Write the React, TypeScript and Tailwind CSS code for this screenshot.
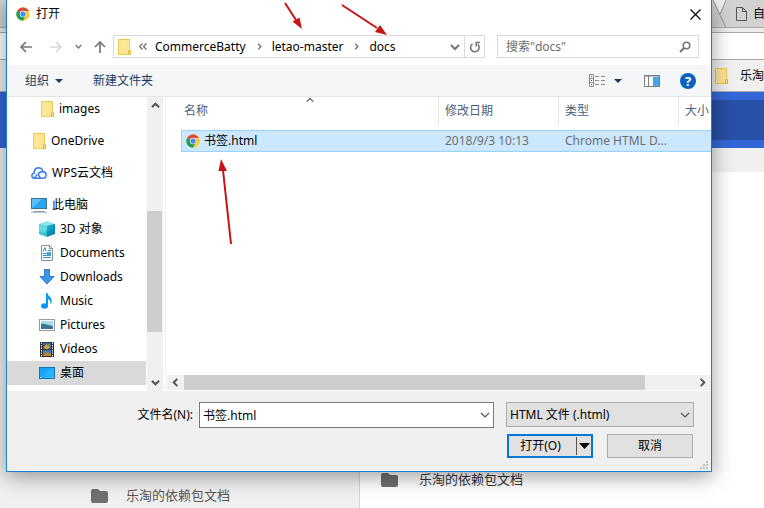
import React from 'react';

const FONT = "font-['Noto_Sans','Noto_Sans_CJK_SC',sans-serif]";

function ChromeIcon({ className }: { className: string }) {
  return (
    <svg className={className} viewBox="0 0 48 48" aria-hidden="true">
      <circle cx="24" cy="24" r="23" fill="#fbcb3d" />
      <path d="M4.1 12.5 A23 23 0 0 0 24 47 L33 29 L24 24 L15 29 Z" fill="#1aa05b" />
      <path d="M4.1 12.5 L14.5 29.5 L20 24 L9 11 Z" fill="#1aa05b" />
      <path d="M5 11.5 A23 23 0 0 1 43.9 13.5 H24 L14 20 Z" fill="#dc4a3d" />
      <circle cx="24" cy="24" r="11" fill="#f4f4f4" />
      <circle cx="24" cy="24" r="9" fill="#4a8af4" />
    </svg>
  );
}

function FolderIcon() {
  return (
    <svg className="h-4 w-[13px] shrink-0" viewBox="0 0 13 16" aria-hidden="true">
      <path d="M.5 .5H11.5V11L12.5 12V15.5H.5Z" fill="#ffe596" stroke="#ecc94f" />
      <path d="M10.5 15.5V12L11.5 11L12.5 12V15.5Z" fill="#ffe082" stroke="#e3b93a" />
    </svg>
  );
}

function Chevron({ className, d, width = 2 }: { className: string; d: string; width?: number }) {
  return (
    <svg className={className} viewBox="0 0 10 10" fill="none" stroke="currentColor" strokeWidth={width} aria-hidden="true">
      <path d={d} />
    </svg>
  );
}

const DOWN = 'M1 3L5 7L9 3';
const UP = 'M1 7L5 3L9 7';
const LEFT = 'M7 1L3 5L7 9';
const RIGHT = 'M3 1L7 5L3 9';

const icon16 = 'h-4 w-4 shrink-0';

function CloudIcon() {
  return (
    <svg className={icon16} viewBox="0 0 16 16" fill="none" stroke="#3f7ff0" strokeWidth="1.6" aria-hidden="true">
      <path d="M5.800 9.600L3.600 13.200C.3 13.200 -.2 8.700 3.300 8C2.800 1.500 11.300 1.300 12 6.600C16.200 7 16 13.200 12.300 13.200H3.600M9.300 13L7 9.300C8.200 7.200 10 6.500 12 6.600" />
    </svg>
  );
}

function ComputerIcon() {
  return (
    <svg className={icon16} viewBox="0 0 16 16" aria-hidden="true">
      <rect x=".5" y="1.500" width="15" height="10" fill="#5cc0fb" stroke="#3a7197" />
      <path d="M1 11L11 2H15V11Z" fill="#2ca4f4" />
      <path d="M2 14.500H14" stroke="#8ba0b5" />
      <path d="M0 15.500H16" stroke="#b5c1ce" />
    </svg>
  );
}

function CubeIcon() {
  return (
    <svg className={icon16} viewBox="0 0 16 16" aria-hidden="true">
      <path d="M0 3L8 0L16 3L8 5Z" fill="#8be6ec" />
      <path d="M0 3L8 5V16L0 13Z" fill="#35c3d3" />
      <path d="M16 3L8 5V16L16 13Z" fill="#078cae" />
      <path d="M0 3L8 5V9L4 12L0 10Z" fill="#63dae2" />
      <path d="M8 5L14 3.500V8L8 11Z" fill="#12a5c8" />
    </svg>
  );
}

function DocumentIcon() {
  return (
    <svg className={icon16} viewBox="0 0 16 16" aria-hidden="true">
      <path d="M2.500 .5H10.500L13.500 3.500V15.500H2.500Z" fill="#fff" stroke="#8a8f94" />
      <path d="M10.500 .5V3.500H13.500" fill="none" stroke="#8a8f94" />
      <path d="M4 6.500L6 2.500L7 6.500M9 5.500H12M4 8.500H8M4 10.500H8M4 12.500H12" stroke="#2e8dd2" fill="none" />
      <rect x="8" y="7" width="4" height="4" fill="#4e9fc5" />
    </svg>
  );
}

function DownloadIcon() {
  return (
    <svg className={icon16} viewBox="0 0 16 16" aria-hidden="true">
      <path d="M5.500 .5H10.500V7.500H15L8 15L1 7.500H5.500Z" fill="#3b97e8" stroke="#2b7dc8" />
    </svg>
  );
}

function MusicIcon() {
  return (
    <svg className={icon16} viewBox="0 0 16 16" aria-hidden="true">
      <ellipse cx="5.500" cy="13" rx="3.500" ry="2.700" fill="#0a97f5" />
      <path d="M7 0H8.500C9 3.500 13 4 12.700 8C12.600 9.500 12 10.500 11 11.500C12 8 11 7 9 6V13H7Z" fill="#0a97f5" />
    </svg>
  );
}

function PictureIcon() {
  return (
    <svg className={icon16} viewBox="0 0 16 16" aria-hidden="true">
      <rect x=".5" y="2.500" width="15" height="11" fill="#fff" stroke="#9a9a9a" />
      <rect x="2" y="4" width="12" height="8" fill="#a9d9f5" />
      <path d="M2 7C5 6 8 8 14 9V12H2Z" fill="#397c85" />
      <path d="M2 10H14V12H2Z" fill="#3a71a5" />
    </svg>
  );
}

function VideoIcon() {
  return (
    <svg className={icon16} viewBox="0 0 16 16" aria-hidden="true">
      <rect x="1" y="1" width="14" height="15" fill="#333" />
      <path d="M2.500 1.500V16M13.500 1.500V16" stroke="#e9e9e9" strokeDasharray="1.5 1" />
      <rect x="4" y="2" width="8" height="6" fill="#3967a8" />
      <rect x="4" y="9" width="8" height="6" fill="#417ac1" />
      <path d="M5 6L8 3L11 6L9 8H6Z" fill="#dda42c" />
      <path d="M4 14L8 11L12 13V15H4Z" fill="#bf862b" />
      <path d="M8 3H11V5H8ZM5 10H7V12H5Z" fill="#5d9849" />
    </svg>
  );
}

function DesktopIcon() {
  return (
    <svg className={icon16} viewBox="0 0 16 16" aria-hidden="true">
      <rect x=".5" y="2.500" width="15" height="11" fill="#18a4fb" stroke="#0b75bd" />
      <path d="M1 13L13 3H15V13Z" fill="#2db0ff" />
      <path d="M1 12.500H3M13 12.500H15" stroke="#d9f0ff" strokeDasharray="1 1" />
    </svg>
  );
}

const places = [
  { name: 'images', icon: <FolderIcon />, row: 'pl-[34px]' },
  { name: 'OneDrive', icon: <FolderIcon />, row: 'mt-2 pl-[26px]' },
  { name: 'WPS云文档', icon: <CloudIcon />, row: 'mt-2 pl-6' },
  { name: '此电脑', icon: <ComputerIcon />, row: 'mt-2 pl-6' },
  { name: '3D 对象', icon: <CubeIcon />, row: 'pl-8' },
  { name: 'Documents', icon: <DocumentIcon />, row: 'pl-8' },
  { name: 'Downloads', icon: <DownloadIcon />, row: 'pl-8' },
  { name: 'Music', icon: <MusicIcon />, row: 'pl-8' },
  { name: 'Pictures', icon: <PictureIcon />, row: 'pl-8' },
  { name: 'Videos', icon: <VideoIcon />, row: 'pl-8' },
  { name: '桌面', icon: <DesktopIcon />, row: 'bg-[#d9d9d9] pl-8' },
];

function GreyFolder() {
  return (
    <svg className="h-[14px] w-[17px] shrink-0" viewBox="0 0 17 14" aria-hidden="true">
      <path d="M2 0H7L9 2H15Q17 2 17 4V12Q17 14 15 14H2Q0 14 0 12V2Q0 0 2 0Z" fill="#6f6f6f" />
    </svg>
  );
}

function BrowserPage() {
  return (
    <div className="flex min-h-screen flex-col">
      <div className="flex h-7 items-center justify-end overflow-hidden border-b border-[#a8a8a8] bg-[#d2d2d2] text-xs">
        <svg className="h-7 w-6 shrink-0" viewBox="0 0 24 28" aria-hidden="true">
          <path d="M5 0L12 14L18 0Z" fill="#f1f1f1" />
          <path d="M5 0L18 28M12 14L18 0" fill="none" stroke="#999" />
        </svg>
        <svg className="ml-1 h-[14px] w-[11px] shrink-0" viewBox="0 0 11 14" fill="none" stroke="#555" aria-hidden="true">
          <path d="M.5 .5H6.500L10.500 4.500V13.500H.5ZM6.500 .5V4.500H10.500" />
        </svg>
        <div className="ml-[6px] w-[11px] whitespace-nowrap text-black">自</div>
      </div>
      <div className="h-8 bg-[#ececec] pt-1">
        <div className="h-[28px] border-y border-[#a9a9a9] bg-white" />
      </div>
      <div className="flex h-8 items-center justify-end gap-3 overflow-hidden border-b border-[#aaa] bg-[#f0f0f0] text-xs">
        <FolderIcon />
        <div className="w-6 whitespace-nowrap">乐淘</div>
      </div>
      <div className="h-14 bg-[#3367d6] py-2">
        <div className="ml-auto h-10 w-3/4 bg-[#2850a7]" />
      </div>
      <div className="h-6 bg-[#f0f0f0]" />
      <div className="flex flex-1 bg-[#f0f0f0] text-[13px] leading-4">
        <div className="flex w-[360px] shrink-0 items-end gap-[18px] border-r border-[#d4d4d4] pb-[5px] pl-[91px] text-[#555]">
          <GreyFolder />
          <span>乐淘的依赖包文档</span>
        </div>
        <div className="flex flex-1 items-end gap-[21px] bg-white pb-[21px] pl-[21px] text-[#333]">
          <GreyFolder />
          <span>乐淘的依赖包文档</span>
        </div>
      </div>
    </div>
  );
}

function NavBar() {
  return (
    <div className="flex h-[37px] items-start pt-[7px] text-[#767676]">
      <div className="flex h-[23px] w-[106px] shrink-0 items-center pl-[13px]">
        <button aria-label="后退" className="mr-[18px]">
          <svg className="h-3 w-3" viewBox="0 0 12 12" fill="none" stroke="#767676" strokeWidth="1.700" aria-hidden="true">
            <path d="M12 6H1M6 1L1 6L6 11" />
          </svg>
        </button>
        <button aria-label="前进" className="mr-[13px]">
          <svg className="h-3 w-3" viewBox="0 0 12 12" fill="none" stroke="#d9d9d9" strokeWidth="1.700" aria-hidden="true">
            <path d="M0 6H11M6 1L11 6L6 11" />
          </svg>
        </button>
        <button aria-label="最近位置" className="mr-3">
          <Chevron className="h-[7px] w-[7px]" d={DOWN} />
        </button>
        <button aria-label="上移">
          <svg className="h-3 w-3" viewBox="0 0 12 12" fill="none" stroke="#767676" strokeWidth="1.700" aria-hidden="true">
            <path d="M6 12V1M1 6L6 1L11 6" />
          </svg>
        </button>
      </div>
      <div className="flex h-[23px] flex-1 items-center border border-[#d9d9d9] pl-1 text-black">
        <FolderIcon />
        <svg className="mx-2 h-[7px] w-2 shrink-0" viewBox="0 0 8 7" fill="none" stroke="#666" strokeWidth="1.200" aria-hidden="true">
          <path d="M3.500 .5L.5 3.500L3.500 6.500M7.500 .5L4.500 3.500L7.500 6.500" />
        </svg>
        <button>CommerceBatty</button>
        <Chevron className="mr-[9px] ml-[10px] h-[7px] w-[7px] text-[#767676]" d={RIGHT} />
        <button>letao-master</button>
        <Chevron className="mr-[9px] ml-[10px] h-[7px] w-[7px] text-[#767676]" d={RIGHT} />
        <button>docs</button>
        <button aria-label="展开地址" className="ml-auto mr-1 text-[#767676]">
          <Chevron className="h-[10px] w-[10px]" d={DOWN} />
        </button>
        <button aria-label="刷新" className="flex h-full w-5 items-center justify-center border-l border-[#d9d9d9] text-[#767676]">
          <svg className="h-3 w-3" viewBox="0 0 12 12" fill="none" stroke="currentColor" strokeWidth="1.600" aria-hidden="true">
            <path d="M8.500 2.800A4.300 4.300 0 1 1 3.200 3.300M1 1.500H4.800V5.500" transform="matrix(-1 0 0 1 12 0)" />
          </svg>
        </button>
      </div>
      <label className="ml-3 mr-3 flex h-[23px] w-[202px] shrink-0 items-center border border-[#d9d9d9] pl-2 pr-[7px]">
        <input aria-label="搜索" placeholder={'搜索"docs"'} className="min-w-0 flex-1 bg-transparent outline-none placeholder:text-[#6d6d6d]" />
        <svg className="h-3 w-3" viewBox="0 0 12 12" fill="none" stroke="#767676" strokeWidth="1.600" aria-hidden="true">
          <circle cx="7.500" cy="4.500" r="3.300" />
          <path d="M5 7L1 11" strokeWidth="2" />
        </svg>
      </label>
    </div>
  );
}

function Toolbar() {
  return (
    <div className="flex h-8 items-center border-b border-[#e5e5e5] bg-[#f5f6f7] pl-[18px] pr-[15px] text-[#1e395b]">
      <button className="flex items-center gap-[6px]">
        组织
        <svg className="h-1 w-2" viewBox="0 0 8 4" aria-hidden="true"><path d="M0 0H8L4 4Z" fill="#1e395b" /></svg>
      </button>
      <button className="ml-[30px]">新建文件夹</button>
      <button aria-label="更改视图" className="ml-auto flex items-center gap-[9px]">
        <svg className="h-[13px] w-4" viewBox="0 0 16 13" fill="none" stroke="#8a8a8a" aria-hidden="true">
          <path d="M.5 .5H4.500V12.500H.5ZM.5 4.500H4.500M.5 8.500H4.500" />
          <path d="M6 2.500H10M12 2.500H16M6 6.500H10M12 6.500H16M6 10.500H10M12 10.500H16" />
          <path d="M2 2.500H3M2 10.500H3" stroke="#3478b5" /><path d="M2 6.500H3" stroke="#a33" />
        </svg>
        <svg className="h-1 w-2" viewBox="0 0 8 4" aria-hidden="true"><path d="M0 0H8L4 4Z" fill="#1e395b" /></svg>
      </button>
      <button aria-label="预览窗格" className="ml-[22px]">
        <svg className="h-3 w-4" viewBox="0 0 16 12" aria-hidden="true">
          <rect x=".5" y=".5" width="15" height="11" fill="#fff" stroke="#7a7f84" />
          <path d="M0 1H16M4.500 1V12" stroke="#7a7f84" />
          <rect x="9" y="2" width="6" height="9" fill="#46a5ea" />
        </svg>
      </button>
      <button aria-label="帮助" className="ml-5 h-4 w-4 rounded-full bg-[#0a62bd] text-center text-[13px] leading-4 font-bold text-white">?</button>
    </div>
  );
}

function Sidebar() {
  return (
    <div className="flex w-[159px] shrink-0 border-r border-[#f0f0f0]">
      <ul className="w-[139px] text-black">
        {places.map((p) => (
          <li key={p.name}>
            <div className={`flex h-6 items-center gap-[5px] whitespace-nowrap ${p.row}`}>
              {p.icon}
              <span>{p.name}</span>
            </div>
          </li>
        ))}
      </ul>
      <div className="ml-px flex w-4 flex-col items-center bg-[#f0f0f0] py-1 text-[#555]">
        <Chevron className="h-[9px] w-[9px]" d={UP} width={2.2} />
        <div className="mt-[101px] h-[121px] w-[15px] self-start bg-[#cdcdcd]" />
        <Chevron className="mt-auto h-[9px] w-[9px]" d={DOWN} width={2.2} />
      </div>
    </div>
  );
}

function FileList() {
  const head = 'h-[27px] border-r border-[#e5e5e5] leading-[27px]';
  const cell = 'h-[22px] border-y border-[#99d1ff] bg-[#cce8ff] p-0';
  return (
    <div className="flex min-w-0 flex-1 flex-col">
      <table className="ml-[15px] table-fixed border-separate border-spacing-0 text-left text-[#6d6d6d]">
        <colgroup>
          <col />
          <col className="w-[120px]" />
          <col className="w-[120px]" />
          <col className="w-8" />
        </colgroup>
        <thead className="text-[#4c607a]">
          <tr>
            <th className="relative h-[33px] p-0 align-top font-normal">
              <Chevron className="absolute top-0 left-1/2 h-2 w-2 -translate-x-1/2 -translate-y-px text-[#555]" d={UP} width={1.5} />
              <div className={`${head} pl-[3px]`}>名称</div>
            </th>
            <th className="p-0 align-top font-normal"><div className={`${head} pl-[6px]`}>修改日期</div></th>
            <th className="p-0 align-top font-normal"><div className={`${head} pl-[6px]`}>类型</div></th>
            <th className="p-0 align-top font-normal"><div className="h-[27px] pl-[6px] leading-[27px] whitespace-nowrap">大小</div></th>
          </tr>
        </thead>
        <tbody>
          <tr>
            <td className={`${cell} border-l`}>
              <div className="flex items-center gap-1 pl-1 text-black">
                <ChromeIcon className="h-[14px] w-[14px]" />
                <span>书签.html</span>
              </div>
            </td>
            <td className={cell}><div className="pl-[6px]">2018/9/3 10:13</div></td>
            <td className={`${cell} whitespace-nowrap`}><div className="pl-[6px]">Chrome HTML D...</div></td>
            <td className={cell} />
          </tr>
        </tbody>
      </table>
      <div className="mt-auto mb-px ml-px flex h-[15px] items-center bg-[#f0f0f0] text-[#555]">
        <Chevron className="ml-1 mr-1 h-[9px] w-[9px] shrink-0" d={LEFT} width={2.2} />
        <div className="h-full flex-1 bg-[#cdcdcd]" />
        <Chevron className="ml-[53px] mr-1 h-[9px] w-[9px] shrink-0" d={RIGHT} width={2.2} />
      </div>
    </div>
  );
}

function Footer() {
  return (
    <div className="relative h-20 bg-[#f0f0f0] pt-[11px] pr-[17px] text-black">
      <div className="flex items-start">
        <label htmlFor="filename" className="w-[192px] shrink-0 pr-[6px] text-right leading-[26px]">文件名(N):</label>
        <div className="relative flex-1">
          <input id="filename" defaultValue="书签.html" className="h-[26px] w-full border border-[#7a7a7a] bg-white px-[3px] outline-none" />
          <Chevron className="absolute right-1 top-2 h-[10px] w-[10px] text-[#555]" d={DOWN} width={1.2} />
        </div>
        <div className="relative ml-3 w-[188px] shrink-0">
          <select aria-label="文件类型" className="h-[25px] w-full appearance-none border border-[#adadad] bg-[#e1e1e1] px-[3px] outline-none">
            <option>HTML 文件 (.html)</option>
          </select>
          <Chevron className="pointer-events-none absolute right-1 top-2 h-[10px] w-[10px] text-[#555]" d={DOWN} width={1.2} />
        </div>
      </div>
      <div className="mt-[6px] flex justify-end gap-[14px] pr-px">
        <div className="flex h-6 w-[86px] items-center border-2 border-[#0078d7] bg-[#e1e1e1]">
          <button className="h-full flex-1 pr-1">打开(O)</button>
          <button aria-label="打开选项" className="flex h-[18px] w-[15px] items-center justify-center border-l border-[#555]">
            <svg className="h-[6px] w-[11px]" viewBox="0 0 11 6" aria-hidden="true"><path d="M0 0H11L5.500 6Z" /></svg>
          </button>
        </div>
        <button className="h-6 w-[86px] border border-[#adadad] bg-[#e1e1e1]">取消</button>
      </div>
      <svg className="absolute right-[3px] bottom-[2px] h-2 w-2" viewBox="0 0 8 8" fill="#bfbfbf" aria-hidden="true">
        <path d="M6 0H8V2H6ZM3 3H5V5H3ZM6 3H8V5H6ZM0 6H2V8H0ZM3 6H5V8H3ZM6 6H8V8H6Z" />
      </svg>
    </div>
  );
}

function RedArrows() {
  return (
    <svg className="pointer-events-none absolute left-0 top-0 h-[250px] w-[400px]" viewBox="0 0 400 250" stroke="#c81414" strokeWidth="2" fill="#c81414" aria-hidden="true">
      <path d="M285 3L296 20M342 5L377 28M231 244L223 170" />
      <path stroke="none" d="M302 29L292.500 21.500L299.500 17.500ZM387 35L375 32L380 25ZM221 159L218.500 171H227Z" />
    </svg>
  );
}

export default function App() {
  return (
    <main className={`relative overflow-hidden ${FONT}`}>
      <BrowserPage />
      <section
        role="dialog"
        aria-labelledby="dialog-title"
        className="absolute top-0 right-[52px] left-[6px] border-x border-b border-[#1a80d2] bg-white text-xs shadow-[0_4px_20px_rgba(0,0,0,0.4)]"
      >
        <header className="flex h-7 items-center pl-[9px] text-black">
          <ChromeIcon className="h-[14px] w-[14px]" />
          <h1 id="dialog-title" className="ml-[6px]">打开</h1>
          <button aria-label="关闭" className="mr-[10px] ml-auto">
            <svg className="h-[11px] w-[11px]" viewBox="0 0 11 11" stroke="#000" strokeWidth="1.200" aria-hidden="true">
              <path d="M.5 .5L10.500 10.500M10.500 .5L.5 10.500" />
            </svg>
          </button>
        </header>
        <NavBar />
        <Toolbar />
        <div className="flex h-[294px]">
          <Sidebar />
          <FileList />
        </div>
        <Footer />
      </section>
      <RedArrows />
    </main>
  );
}
